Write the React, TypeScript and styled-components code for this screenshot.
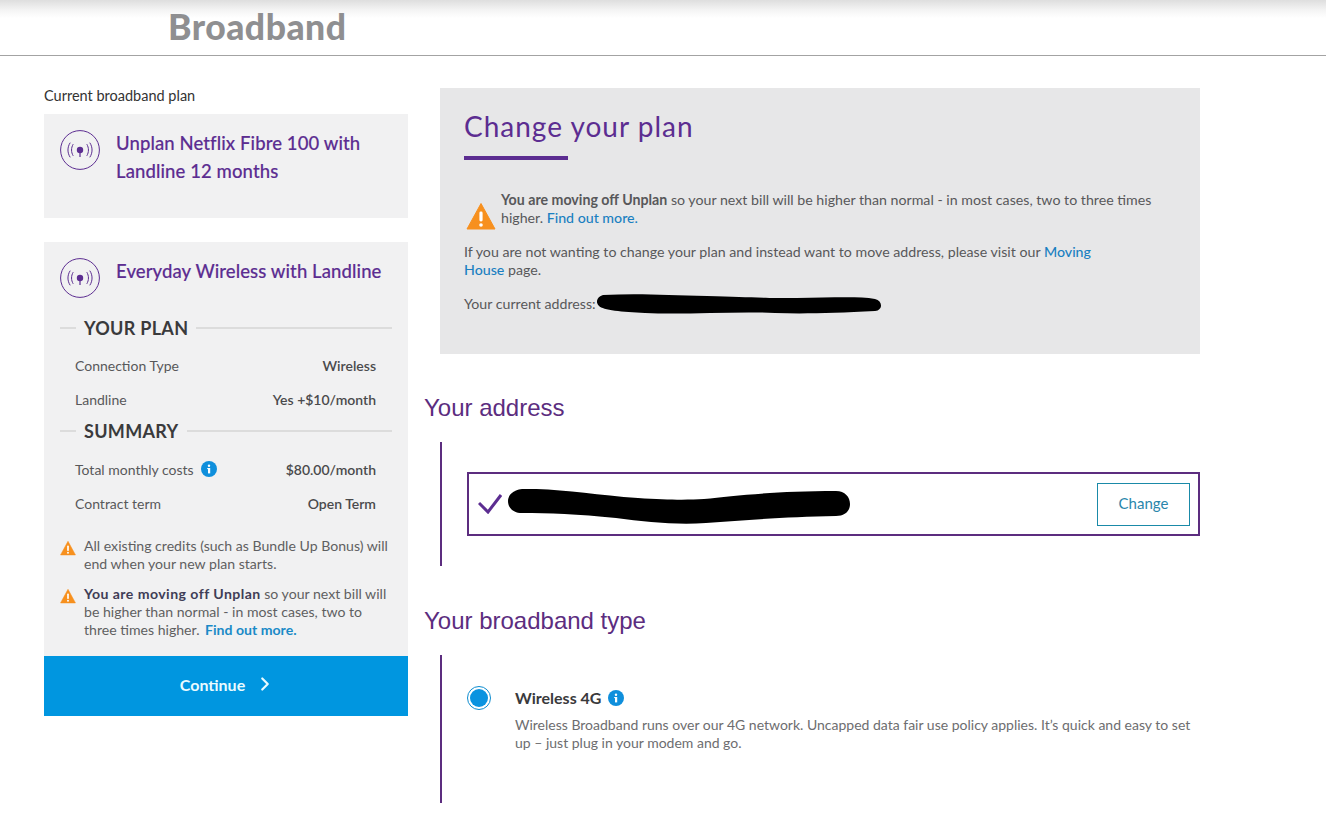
import styled, { createGlobalStyle } from "styled-components";
import { ChevronRight } from "lucide-react";

const GlobalStyle = createGlobalStyle`
  html, body {
    margin: 0;
    padding: 0;
    background: #fff;
    font-family: Lato, "Open Sans", Arial, sans-serif;
    color: #4a4a4a;
  }
`;

function SignalIcon() {
  return (
    <SignalSvg viewBox="0 0 40 40">
      <circle cx="20" cy="20" r="19.4" fill="none" stroke="#5c2d91" strokeWidth="1" />
      <circle cx="20" cy="20" r="3.2" fill="#5c2d91" />
      <path d="M20 22v5" stroke="#5c2d91" strokeWidth="1.2" />
      <g fill="none" stroke="#5c2d91" strokeWidth="1" strokeLinecap="round">
        <path d="M13 14.5c-2 3.4-2 7.6 0 11" />
        <path d="M10 13c-2.8 4.2-2.8 9.8 0 14" />
        <path d="M27 14.5c2 3.4 2 7.6 0 11" />
        <path d="M30 13c2.8 4.2 2.8 9.8 0 14" />
      </g>
    </SignalSvg>
  );
}

function WarnIcon({ size }: { size: number }) {
  return (
    <svg width={size} height={size} viewBox="0 0 30 28">
      <path d="M15 1.5 29 27H1Z" fill="#f7901e" stroke="#f7901e" strokeLinejoin="round" />
      <rect x="13.4" y="9.5" width="3.2" height="10" rx="1.4" fill="#fff" />
      <circle cx="15" cy="23" r="1.8" fill="#fff" />
    </svg>
  );
}

function InfoIcon({ size }: { size: number }) {
  return (
    <svg width={size} height={size} viewBox="0 0 16 16">
      <circle cx="8" cy="8" r="8" fill="#0f8fdc" />
      <rect x="7" y="7" width="2.2" height="5.4" fill="#fff" />
      <rect x="6.2" y="7" width="2" height="1.1" fill="#fff" />
      <circle cx="8" cy="4.7" r="1.2" fill="#fff" />
    </svg>
  );
}

export default function App() {
  return (
    <>
      <GlobalStyle />
      <Header>
        <PageTitle>Broadband</PageTitle>
      </Header>
      <Page>
        <Sidebar>
          <CurrentLabel>Current broadband plan</CurrentLabel>
          <CurrentCard>
            <SignalIcon />
            <PlanName>Unplan Netflix Fibre 100 with Landline 12 months</PlanName>
          </CurrentCard>
          <SummaryCard>
            <NewPlanHead>
              <SignalIcon />
              <PlanName>Everyday Wireless with Landline</PlanName>
            </NewPlanHead>
            <SectionTitle>YOUR PLAN</SectionTitle>
            <Row>
              <RowLabel>Connection Type</RowLabel>
              <RowValue>Wireless</RowValue>
            </Row>
            <Row>
              <RowLabel>Landline</RowLabel>
              <RowValue>Yes +$10/month</RowValue>
            </Row>
            <SectionTitle $tight>SUMMARY</SectionTitle>
            <Row>
              <RowLabel>
                Total monthly costs <InfoIcon size={16} />
              </RowLabel>
              <RowValue>$80.00/month</RowValue>
            </Row>
            <Row>
              <RowLabel>Contract term</RowLabel>
              <RowValue>Open Term</RowValue>
            </Row>
            <Notes>
              <Note>
                <NoteIcon>
                  <WarnIcon size={16} />
                </NoteIcon>
                <span>All existing credits (such as Bundle Up Bonus) will end when your new plan starts.</span>
              </Note>
              <Note>
                <NoteIcon>
                  <WarnIcon size={16} />
                </NoteIcon>
                <span>
                  <strong>You are moving off Unplan</strong> so your next bill will be higher than normal - in most
                  cases, two to three times higher. <NoteLink>Find out more.</NoteLink>
                </span>
              </Note>
            </Notes>
          </SummaryCard>
          <ContinueButton>
            Continue <ChevronRight size={22} strokeWidth={2.4} />
          </ContinueButton>
        </Sidebar>

        <Main>
          <ChangeCard>
            <ChangeTitle>Change your plan</ChangeTitle>
            <TitleRule />
            <WarningRow>
              <WarnIcon size={30} />
              <p>
                <strong>You are moving off Unplan</strong> so your next bill will be higher than normal - in most
                cases, two to three times higher. <BlueLink>Find out more.</BlueLink>
              </p>
            </WarningRow>
            <MovePara>
              If you are not wanting to change your plan and instead want to move address, please visit our{" "}
              <BlueLink>Moving House</BlueLink> page.
            </MovePara>
            <AddressLine>
              Your current address:
              <BlotOne viewBox="0 0 284 20" preserveAspectRatio="none">
                <path
                  d="M6 1C40-1 70 1 110 2c40 1 50 2 90 2 30 0 60-2 78 1 8 2 8 11 0 12-40 2-70 3-100 2-40-2-90 2-130 0C25 18 6 16 2 12-2 8 0 3 6 1Z"
                  fill="#000"
                />
              </BlotOne>
            </AddressLine>
          </ChangeCard>

          <SectionHeading>Your address</SectionHeading>
          <AddressSection>
            <AddressBox>
              <CheckMark viewBox="0 0 24 20">
                <path d="M1 9 10 18 23 1" fill="none" stroke="#5c2d91" strokeWidth="3" />
              </CheckMark>
              <BlotTwo viewBox="0 0 342 35" preserveAspectRatio="none">
                <path
                  d="M14 0C50-1 85 6 130 9c30 2 50 2 66 1 30-3 70-8 132-8 9 0 14 6 14 13 0 7-5 12-14 12-50 1-90 4-130 7-30 2-60-1-90-5C70 25 40 24 14 24 4 24 0 18 0 12 0 6 5 1 14 0Z"
                  fill="#000"
                />
              </BlotTwo>
              <ChangeButton>Change</ChangeButton>
            </AddressBox>
          </AddressSection>

          <SectionHeading $gap={40}>Your broadband type</SectionHeading>
          <TypeSection>
            <RadioOuter>
              <RadioDot />
            </RadioOuter>
            <TypeText>
              <TypeTitle>
                Wireless 4G <InfoIcon size={16} />
              </TypeTitle>
              <TypeDesc>
                Wireless Broadband runs over our 4G network. Uncapped data fair use policy applies. It’s quick and easy
                to set up – just plug in your modem and go.
              </TypeDesc>
            </TypeText>
          </TypeSection>
        </Main>
      </Page>
    </>
  );
}

const Header = styled.header`
  height: 56px;
  box-sizing: border-box;
  padding-left: 168px;
  background: linear-gradient(#dedede 0, #f4f4f4 10px, #fff 18px);
  border-bottom: 1px solid #a3a3a3;
`;
const PageTitle = styled.h1`
  margin: 0;
  padding-top: 6px;
  font-size: 35.5px;
  line-height: 42px;
  font-weight: 900;
  letter-spacing: 0.5px;
  color: #8f8f91;
`;
const Page = styled.main`
  display: flex;
  padding: 32px 0 0 44px;
  width: 1156px;
`;
const Sidebar = styled.aside`
  width: 364px;
  flex: none;
`;
const CurrentLabel = styled.div`
  font-size: 14.5px;
  line-height: 16px;
  color: #333;
  margin-bottom: 10px;
`;
const SignalSvg = styled.svg`
  width: 40px;
  height: 40px;
  flex: none;
`;
const CurrentCard = styled.section`
  height: 104px;
  box-sizing: border-box;
  background: #f1f1f2;
  padding: 16px 16px 0;
  display: flex;
  gap: 16px;
`;
const PlanName = styled.div`
  font-size: 18.5px;
  line-height: 28px;
  font-weight: 500;
  color: #5c2d91;
  letter-spacing: 0.1px;
  -webkit-text-stroke: 0.15px #5c2d91;
  margin-top: -1px;
`;
const SummaryCard = styled.section`
  margin-top: 24px;
  height: 414px;
  box-sizing: border-box;
  background: #f1f1f2;
  padding: 16px 16px 0;
`;
const NewPlanHead = styled.div`
  display: flex;
  gap: 16px;
  height: 48px;
`;
const SectionTitle = styled.h3<{ $tight?: boolean }>`
  display: flex;
  align-items: center;
  gap: 8px;
  margin: ${(p) => (p.$tight ? "-6px" : "9px")} 0 ${(p) => (p.$tight ? "16px" : "15px")};
  font-size: 18px;
  line-height: 26px;
  font-weight: 700;
  color: #3a3a3c;
  letter-spacing: 0.3px;

  &::before {
    content: "";
    width: 16px;
    height: 2px;
    background: #dcdcdc;
  }
  &::after {
    content: "";
    flex: 1;
    height: 2px;
    background: #dcdcdc;
  }
`;
const Row = styled.div`
  display: flex;
  justify-content: space-between;
  align-items: center;
  height: 34px;
  padding: 0 16px 0 15px;
  margin-top: -8px;
  margin-bottom: 8px;
  font-size: 14px;
`;
const RowLabel = styled.span`
  display: flex;
  align-items: center;
  gap: 7px;
  color: #58585a;
`;
const RowValue = styled.span`
  color: #4a4a4c;
  font-weight: 600;
`;
const Notes = styled.div`
  margin-top: 17px;
  display: flex;
  flex-direction: column;
  gap: 12px;
`;
const Note = styled.div`
  display: flex;
  gap: 8px;
  font-size: 14.1px;
  line-height: 18px;
  color: #5f5f61;

  strong {
    color: #3f3d56;
    letter-spacing: 0.44px;
  }
`;
const NoteIcon = styled.span`
  flex: none;
  width: 16px;
  height: 16px;
  padding-top: 3px;
`;
const NoteLink = styled.a`
  color: #1a8ac7;
  font-weight: 700;
  margin-left: 2px;
`;
const ContinueButton = styled.button`
  display: flex;
  width: 100%;
  height: 60px;
  align-items: center;
  justify-content: center;
  gap: 9px;
  padding: 0 0 4px 4px;
  border: 0;
  background: #0096e0;
  color: #e9fbff;
  font: 700 16px Lato, sans-serif;
`;
const Main = styled.div`
  width: 776px;
  margin-left: 16px;
`;
const ChangeCard = styled.section`
  margin-left: 16px;
  width: 760px;
  height: 266px;
  box-sizing: border-box;
  background: #e7e7e8;
  padding: 19px 24px 0;
  font-size: 14.2px;
  line-height: 18px;
  color: #58585a;
`;
const ChangeTitle = styled.h2`
  margin: 0;
  font-size: 28px;
  line-height: 38px;
  font-weight: 400;
  color: #5c2d91;
  letter-spacing: 1px;
`;
const TitleRule = styled.div`
  width: 104px;
  height: 4px;
  margin-top: 11px;
  background: #5c2d91;
`;
const WarningRow = styled.div`
  display: flex;
  align-items: flex-start;
  gap: 5px;
  margin-top: 31px;

  svg {
    flex: none;
    margin: 10px 0 0 2px;
  }
  p {
    margin: 0;
  }
`;
const BlueLink = styled.a`
  color: #1a7fc1;
  font-weight: 500;
`;
const MovePara = styled.p`
  margin: 12px 0 0;
  width: 650px;
`;
const AddressLine = styled.div`
  display: flex;
  align-items: center;
  margin-top: 16px;
  height: 18px;
`;
const BlotOne = styled.svg`
  width: 284px;
  height: 20px;
  flex: none;
  margin-left: 1px;
`;
const SectionHeading = styled.h2<{ $gap?: number }>`
  margin: ${(p) => p.$gap ?? 39}px 0 0;
  font: 400 24px/30px "Liberation Sans", Arial, sans-serif;
  color: #5c2d7f;
`;
const AddressSection = styled.section`
  margin: 19px 0 0 16px;
  height: 124px;
  box-sizing: border-box;
  border-left: 2px solid #5c2d7f;
  padding: 30px 0 0 25px;
`;
const AddressBox = styled.div`
  display: flex;
  align-items: center;
  height: 64px;
  box-sizing: border-box;
  border: 2px solid #5c2d7f;
  padding: 0 8px 0 9px;
`;
const CheckMark = styled.svg`
  width: 24px;
  height: 20px;
  flex: none;
`;
const BlotTwo = styled.svg`
  width: 342px;
  height: 35px;
  flex: none;
  margin: 4px 0 0 6px;
`;
const ChangeButton = styled.button`
  margin-left: auto;
  width: 93px;
  height: 43px;
  padding: 0 0 3px;
  background: #fff;
  border: 1px solid #1a8aa8;
  color: #2a86ab;
  font: 400 15px Lato, sans-serif;
`;
const TypeSection = styled.section`
  margin: 19px 0 0 16px;
  height: 148px;
  box-sizing: border-box;
  border-left: 2px solid #5c2d7f;
  padding: 31px 0 0 25px;
  display: flex;
  gap: 24px;
`;
const RadioOuter = styled.span`
  flex: none;
  width: 24px;
  height: 24px;
  box-sizing: border-box;
  border: 1px solid #0d8ccf;
  border-radius: 50%;
  display: flex;
  align-items: center;
  justify-content: center;
`;
const RadioDot = styled.span`
  width: 18px;
  height: 18px;
  border-radius: 50%;
  background: #0a93e0;
`;
const TypeText = styled.div`
  flex: 1;
`;
const TypeTitle = styled.div`
  display: flex;
  align-items: center;
  gap: 7px;
  margin-top: 2px;
  font-size: 16px;
  line-height: 20px;
  font-weight: 700;
  color: #3a3a3c;
`;
const TypeDesc = styled.p`
  margin: 8px 0 0;
  font-size: 14px;
  line-height: 18px;
  color: #6d6d6f;
`;
